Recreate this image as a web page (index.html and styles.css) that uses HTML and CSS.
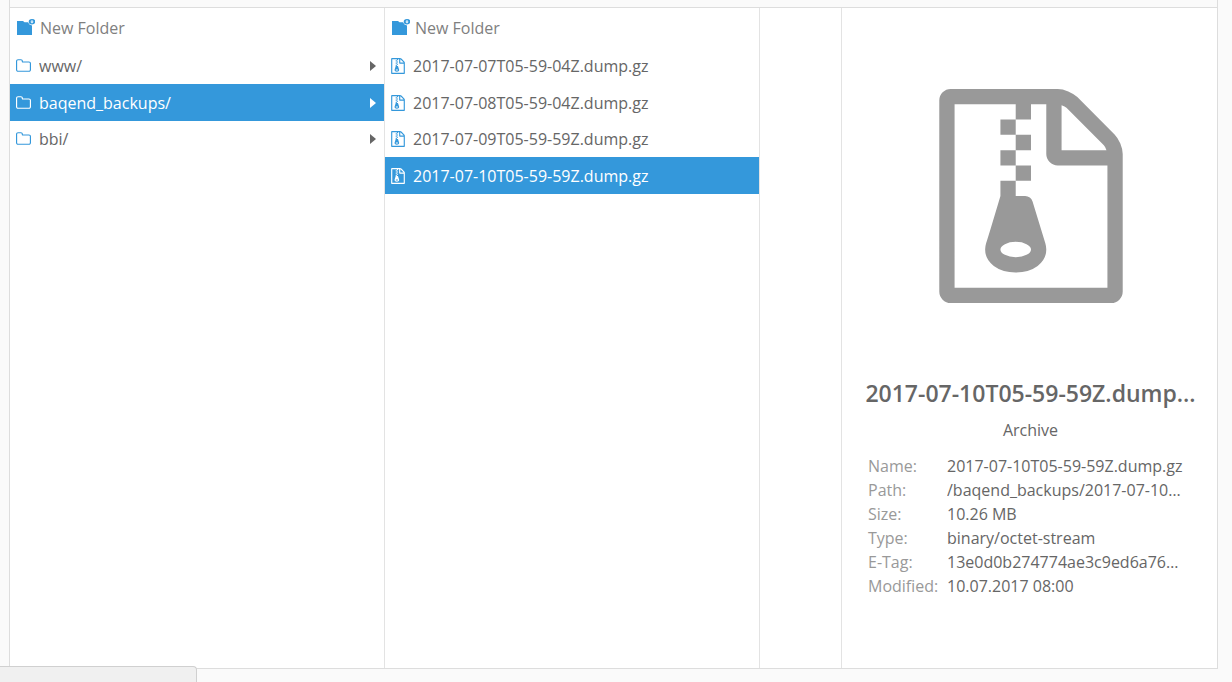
FILE: index.html
```html
<!DOCTYPE html>
<html lang="en">
<head>
<meta charset="utf-8">
<title>Files</title>
<link rel="stylesheet" href="styles.css">
</head>
<body>
<svg class="symbols" aria-hidden="true">
  <symbol id="folder" viewBox="0 128 1664 1408"><path d="M1536 1312v-704q0-40-28-68t-68-28h-704q-40 0-68-28t-28-68v-64q0-40-28-68t-68-28h-320q-40 0-68 28t-28 68v960q0 40 28 68t68 28h1216q40 0 68-28t28-68zm128-704v704q0 92-66 158t-158 66h-1216q-92 0-158-66t-66-158v-960q0-92 66-158t158-66h320q92 0 158 66t66 158v32h672q92 0 158 66t66 158z"/></symbol>
  <symbol id="archive" viewBox="0 0 1536 1792"><path fill-rule="evenodd" d="M1468 380q28 28 48 76t20 88v1152q0 40-28 68t-68 28h-1344q-40 0-68-28t-28-68v-1600q0-40 28-68t68-28h896q40 0 88 20t76 48zM1024 136v376h376q-10-29-22-41l-313-313q-12-12-41-22zM1408 1664v-1024h-416q-40 0-68-28t-28-68v-416h-128v128h-128v-128h-512v1536h1280zM640 384v-128h-128v128zM768 512v-128h-128v128zM640 640v-128h-128v128zM768 768v-128h-128v128zM781 943l107 349q8 27 8 52 0 83-72.500 137.500t-183.500 54.500-183.500-54.500-72.500-137.500q0-25 8-52 21-63 120-396v-128h128v128h79q22 0 39 13t23 34zM640 1408q53 0 90.500-19t37.500-45-37.500-45-90.500-19-90.500 19-37.500 45 37.500 45 90.500 19z"/></symbol>
  <symbol id="new-folder" viewBox="0 0 18 16"><path d="M0 2H6L7.500 3.200H11L12.500 5.500L15 6.500V16H0z"/><path fill-rule="evenodd" d="M15 0a3.300 2.700 0 1 1 0 5.400a3.300 2.700 0 1 1 0-5.400zM15 1.200a1.300 1.500 0 1 0 0 3a1.300 1.500 0 1 0 0-3z"/><path d="M14.700 1.700h.6v2h-.6z"/></symbol>
</svg>
<main class="browser">
  <section class="column">
    <button class="create"><svg class="icon-new"><use href="#new-folder"/></svg>New Folder</button>
    <ul class="entries">
      <li><button class="entry"><svg class="icon-folder"><use href="#folder"/></svg><span class="label">www/</span><span class="caret"></span></button></li>
      <li><button class="entry selected"><svg class="icon-folder"><use href="#folder"/></svg><span class="label">baqend_backups/</span><span class="caret"></span></button></li>
      <li><button class="entry"><svg class="icon-folder"><use href="#folder"/></svg><span class="label">bbi/</span><span class="caret"></span></button></li>
    </ul>
  </section>
  <section class="column">
    <button class="create"><svg class="icon-new"><use href="#new-folder"/></svg>New Folder</button>
    <ul class="entries">
      <li><button class="entry"><svg class="icon-file"><use href="#archive"/></svg><span class="label">2017-07-07T05-59-04Z.dump.gz</span></button></li>
      <li><button class="entry"><svg class="icon-file"><use href="#archive"/></svg><span class="label">2017-07-08T05-59-04Z.dump.gz</span></button></li>
      <li><button class="entry"><svg class="icon-file"><use href="#archive"/></svg><span class="label">2017-07-09T05-59-59Z.dump.gz</span></button></li>
      <li><button class="entry selected"><svg class="icon-file"><use href="#archive"/></svg><span class="label">2017-07-10T05-59-59Z.dump.gz</span></button></li>
    </ul>
  </section>
  <aside class="details">
    <svg class="preview"><use href="#archive"/></svg>
    <h1 class="title">2017-07-10T05-59-59Z.dump…</h1>
    <p class="kind">Archive</p>
    <dl class="meta">
      <dt>Name:</dt><dd>2017-07-10T05-59-59Z.dump.gz</dd>
      <dt>Path:</dt><dd>/baqend_backups/2017-07-10…</dd>
      <dt>Size:</dt><dd>10.26 MB</dd>
      <dt>Type:</dt><dd>binary/octet-stream</dd>
      <dt>E-Tag:</dt><dd>13e0d0b274774ae3c9ed6a76…</dd>
      <dt>Modified:</dt><dd>10.07.2017 08:00</dd>
    </dl>
  </aside>
</main>
<div class="status"></div>
</body>
</html>
```
FILE: styles.css
```css
* {
  box-sizing: border-box;
}

body {
  display: flex;
  flex-direction: column;
  min-height: 100vh;
  margin: 0;
  padding: 0 14px 13px 9px;
  background: #fafafa;
  color: #666;
  font: 16px/24px "Open Sans", sans-serif;
}

.symbols {
  position: absolute;
  width: 0;
  height: 0;
}

svg {
  flex: none;
  fill: currentColor;
}

.browser {
  display: flex;
  flex: 1;
  border: 1px solid #ddd;
  border-top: 0;
  background: linear-gradient(#fafafa 7px, #ddd 7px, #ddd 8px, #fff 8px);
}

.column {
  flex: 0 1 375px;
  min-width: 0;
  margin-top: 8px;
  border-right: 1px solid #e3e3e3;
}

button {
  display: flex;
  align-items: center;
  width: 100%;
  border: 0;
  background: none;
  color: inherit;
  font: inherit;
  text-align: left;
  cursor: pointer;
}

.create {
  gap: 5px;
  height: 39px;
  padding: 0 7px;
  color: #808080;
}

.icon-new {
  width: 18px;
  height: 16px;
  margin-bottom: 2px;
  color: #3498db;
}

.entries {
  display: grid;
  grid-auto-rows: 37px 36px;
  margin: 0;
  padding: 0;
  list-style: none;
}

.entry {
  gap: 8px;
  height: 37px;
  padding: 0 8px 0 6px;
}

.icon-folder {
  width: 15px;
  height: 13px;
  color: #3498db;
}

.icon-file {
  width: 14px;
  height: 16px;
  color: #3498db;
}

.label {
  flex: 1;
  overflow: hidden;
  text-overflow: ellipsis;
  white-space: nowrap;
}

.caret {
  border-style: solid;
  border-width: 5px 0 5px 6px;
  border-color: transparent transparent transparent currentColor;
}

.selected {
  background: #3498db;
  font-weight: 500;
}

.selected,
.selected svg {
  color: #fff;
}

.details {
  display: flex;
  flex-direction: column;
  align-items: center;
  width: 376px;
  margin: 8px 0 0 auto;
  padding: 81px 24px 0 26px;
  border-left: 1px solid #e3e3e3;
}

.preview {
  width: 184px;
  height: 214px;
  color: #999;
}

.title {
  margin: 74px 0 0;
  font-size: 23px;
  font-weight: 600;
  line-height: 32px;
  white-space: nowrap;
}

.kind {
  margin: 9px 0 12px;
}

.meta {
  display: grid;
  grid-template-columns: 79px minmax(0, 1fr);
  width: 100%;
  margin: 0;
}

.meta dt {
  color: #999;
}

.meta dd {
  margin: 0;
  overflow: hidden;
  text-overflow: ellipsis;
  white-space: nowrap;
}

.status {
  position: fixed;
  bottom: 0;
  left: 0;
  width: 197px;
  height: 16px;
  border: 1px solid #d0d0d0;
  border-width: 1px 1px 0 0;
  border-radius: 0 4px 0 0;
  background: #f0f0f0;
}
```
